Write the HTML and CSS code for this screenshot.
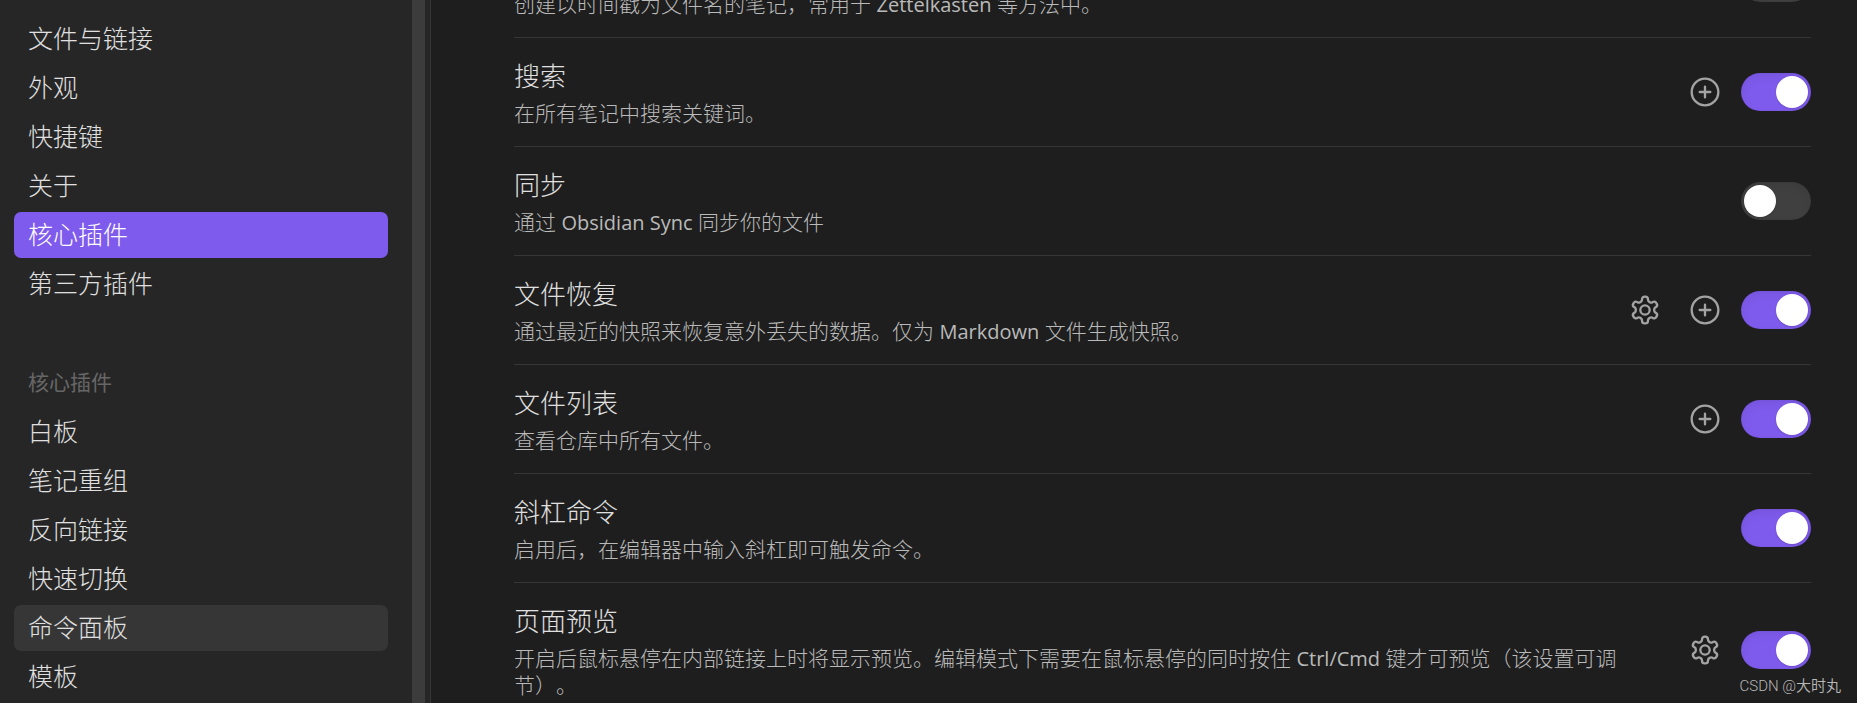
FILE: index.html
```html
<!DOCTYPE html>
<html lang="zh-CN">
<head>
    <meta charset="UTF-8">
    <meta name="viewport" content="width=device-width, initial-scale=1.0">
    <title>核心插件</title>
    <link rel="stylesheet" href="styles.css">
</head>
<body>

    <!-- Shared icons -->
    <svg class="icon-defs" aria-hidden="true">
        <symbol id="icon-plus" viewBox="0 0 24 24">
            <circle cx="12" cy="12" r="10"/>
            <path d="M12 8v8M8 12h8"/>
        </symbol>
        <symbol id="icon-gear" viewBox="0 0 24 24">
            <path d="M12.22 2h-.44a2 2 0 0 0-2 2v.18a2 2 0 0 1-1 1.73l-.43.25a2 2 0 0 1-2 0l-.15-.08a2 2 0 0 0-2.73.73l-.22.38a2 2 0 0 0 .73 2.73l.15.1a2 2 0 0 1 1 1.72v.51a2 2 0 0 1-1 1.74l-.15.09a2 2 0 0 0-.73 2.73l.22.38a2 2 0 0 0 2.73.73l.15-.08a2 2 0 0 1 2 0l.43.25a2 2 0 0 1 1 1.73V20a2 2 0 0 0 2 2h.44a2 2 0 0 0 2-2v-.18a2 2 0 0 1 1-1.73l.43-.25a2 2 0 0 1 2 0l.15.08a2 2 0 0 0 2.73-.73l.22-.39a2 2 0 0 0-.73-2.73l-.15-.08a2 2 0 0 1-1-1.74v-.5a2 2 0 0 1 1-1.74l.15-.09a2 2 0 0 0 .73-2.73l-.22-.38a2 2 0 0 0-2.73-.73l-.15.08a2 2 0 0 1-2 0l-.43-.25a2 2 0 0 1-1-1.73V4a2 2 0 0 0-2-2z"/>
            <circle cx="12" cy="12" r="3.5"/>
        </symbol>
    </svg>

    <div class="settings">
        <aside class="sidebar">
            <nav class="nav">
                <div class="nav-group">
                    <a class="nav-item" href="#">文件与链接</a>
                    <a class="nav-item" href="#">外观</a>
                    <a class="nav-item" href="#">快捷键</a>
                    <a class="nav-item" href="#">关于</a>
                    <a class="nav-item active" href="#">核心插件</a>
                    <a class="nav-item" href="#">第三方插件</a>
                </div>
                <div class="nav-group">
                    <div class="nav-title">核心插件</div>
                    <a class="nav-item" href="#">白板</a>
                    <a class="nav-item" href="#">笔记重组</a>
                    <a class="nav-item" href="#">反向链接</a>
                    <a class="nav-item" href="#">快速切换</a>
                    <a class="nav-item hovered" href="#">命令面板</a>
                    <a class="nav-item" href="#">模板</a>
                </div>
            </nav>
            <div class="scrollbar"></div>
        </aside>

        <main class="content">
            <div class="setting">
                <div class="info">
                    <label class="name" for="zettel">时间戳笔记</label>
                    <div class="desc">创建以时间戳为文件名的笔记，常用于 <span class="latin">Zettelkasten</span> 等方法中。</div>
                </div>
                <div class="controls">
                    <input class="toggle" type="checkbox" id="zettel">
                </div>
            </div>

            <div class="setting">
                <div class="info">
                    <label class="name" for="search">搜索</label>
                    <div class="desc">在所有笔记中搜索关键词。</div>
                </div>
                <div class="controls">
                    <button class="icon-button" aria-label="快捷键"><svg><use href="#icon-plus"/></svg></button>
                    <input class="toggle" type="checkbox" id="search" checked>
                </div>
            </div>

            <div class="setting">
                <div class="info">
                    <label class="name" for="sync">同步</label>
                    <div class="desc">通过 <span class="latin">Obsidian Sync</span> 同步你的文件</div>
                </div>
                <div class="controls">
                    <input class="toggle" type="checkbox" id="sync">
                </div>
            </div>

            <div class="setting">
                <div class="info">
                    <label class="name" for="recovery">文件恢复</label>
                    <div class="desc">通过最近的快照来恢复意外丢失的数据。仅为 <span class="latin">Markdown</span> 文件生成快照。</div>
                </div>
                <div class="controls">
                    <button class="icon-button" aria-label="选项"><svg><use href="#icon-gear"/></svg></button>
                    <button class="icon-button" aria-label="快捷键"><svg><use href="#icon-plus"/></svg></button>
                    <input class="toggle" type="checkbox" id="recovery" checked>
                </div>
            </div>

            <div class="setting">
                <div class="info">
                    <label class="name" for="explorer">文件列表</label>
                    <div class="desc">查看仓库中所有文件。</div>
                </div>
                <div class="controls">
                    <button class="icon-button" aria-label="快捷键"><svg><use href="#icon-plus"/></svg></button>
                    <input class="toggle" type="checkbox" id="explorer" checked>
                </div>
            </div>

            <div class="setting">
                <div class="info">
                    <label class="name" for="slash">斜杠命令</label>
                    <div class="desc">启用后，在编辑器中输入斜杠即可触发命令。</div>
                </div>
                <div class="controls">
                    <input class="toggle" type="checkbox" id="slash" checked>
                </div>
            </div>

            <div class="setting">
                <div class="info">
                    <label class="name" for="preview">页面预览</label>
                    <div class="desc">开启后鼠标悬停在内部链接上时将显示预览。编辑模式下需要在鼠标悬停的同时按住 <span class="latin">Ctrl/Cmd</span> 键才可预览（该设置可调节）。</div>
                </div>
                <div class="controls">
                    <button class="icon-button" aria-label="选项"><svg><use href="#icon-gear"/></svg></button>
                    <input class="toggle" type="checkbox" id="preview" checked>
                </div>
            </div>
        </main>
    </div>

    <div class="watermark">CSDN @大时丸</div>

</body>
</html>
```
FILE: styles.css
```css
* {
    box-sizing: border-box;
}

body {
    margin: 0;
    background-color: #1e1e1e;
    color: #e0e0e0;
    font-family: "Open Sans", "Noto Sans CJK SC", sans-serif;
    font-weight: 300;
    text-spacing-trim: space-all;
    overflow: hidden;
}

.icon-defs {
    display: none;
}

.settings {
    display: flex;
    height: 100vh;
    overflow: hidden;
}

/* Sidebar */
.sidebar {
    display: flex;
    flex: 0 0 431px;
    padding-right: 5px;
    background-color: #262626;
    border-right: 1px solid #363636;
}

.nav {
    flex: 1;
    padding: 16px 24px 0 14px;
}

.nav-group {
    display: flex;
    flex-direction: column;
    gap: 3px;
    margin-bottom: 53px;
}

.nav-item,
.nav-title {
    height: 46px;
    padding: 0 14px;
    border-radius: 7px;
    line-height: 44px;
}

.nav-item {
    color: #e0e0e0;
    font-size: 25px;
    text-decoration: none;
}

.nav-title {
    color: #666;
    font-size: 21px;
    font-weight: 400;
}

.nav-item.active {
    background-color: #7f5bed;
    color: #fff;
}

.nav-item.hovered {
    background-color: #363636;
}

.scrollbar {
    width: 13px;
    background-color: #3c3c3c;
}

/* Plugin list */
.content {
    flex: 1;
    margin-top: -72px;
    padding: 0 46px 0 83px;
}

.setting {
    display: flex;
    align-items: center;
    padding: 18px 0 19px;
    border-top: 1px solid #363636;
}

.info {
    flex: 1;
    margin-right: 14px;
}

.name {
    display: block;
    margin-bottom: 4px;
    font-size: 26px;
    line-height: 40px;
}

.desc {
    color: #bababa;
    font-size: 21px;
    line-height: 27px;
}

/* light looks too thin for latin words */
.latin {
    font-size: 20px;
    font-weight: 400;
}

.controls {
    display: flex;
    align-items: center;
    gap: 13px;
}

.icon-button {
    display: flex;
    align-items: center;
    justify-content: center;
    width: 47px;
    height: 40px;
    padding: 0;
    background: none;
    border: none;
    color: #a3a3a3;
    cursor: pointer;
}

.icon-button svg {
    width: 32px;
    height: 32px;
    fill: none;
    stroke: currentColor;
    stroke-width: 1.75;
    stroke-linecap: round;
    stroke-linejoin: round;
}

.toggle {
    appearance: none;
    width: 70px;
    height: 38px;
    margin: 0;
    padding: 3px;
    background-color: #404040;
    border-radius: 19px;
    box-shadow: inset 0 4px 10px rgba(0, 0, 0, 0.07), inset 0 0 1px rgba(0, 0, 0, 0.21);
    cursor: pointer;
}

.toggle::before {
    content: "";
    display: block;
    width: 32px;
    height: 32px;
    background-color: #fff;
    border-radius: 50%;
    box-shadow: 0 1px 2px rgba(0, 0, 0, 0.15);
}

.toggle:checked {
    background-color: #7f5bed;
}

.toggle:checked::before {
    margin-left: auto;
}

.watermark {
    position: absolute;
    right: 16px;
    bottom: 6px;
    color: #b8b8b8;
    font-family: Roboto, "Noto Sans CJK SC", sans-serif;
    font-size: 15px;
    font-weight: 350;
    line-height: 22px;
}
```
